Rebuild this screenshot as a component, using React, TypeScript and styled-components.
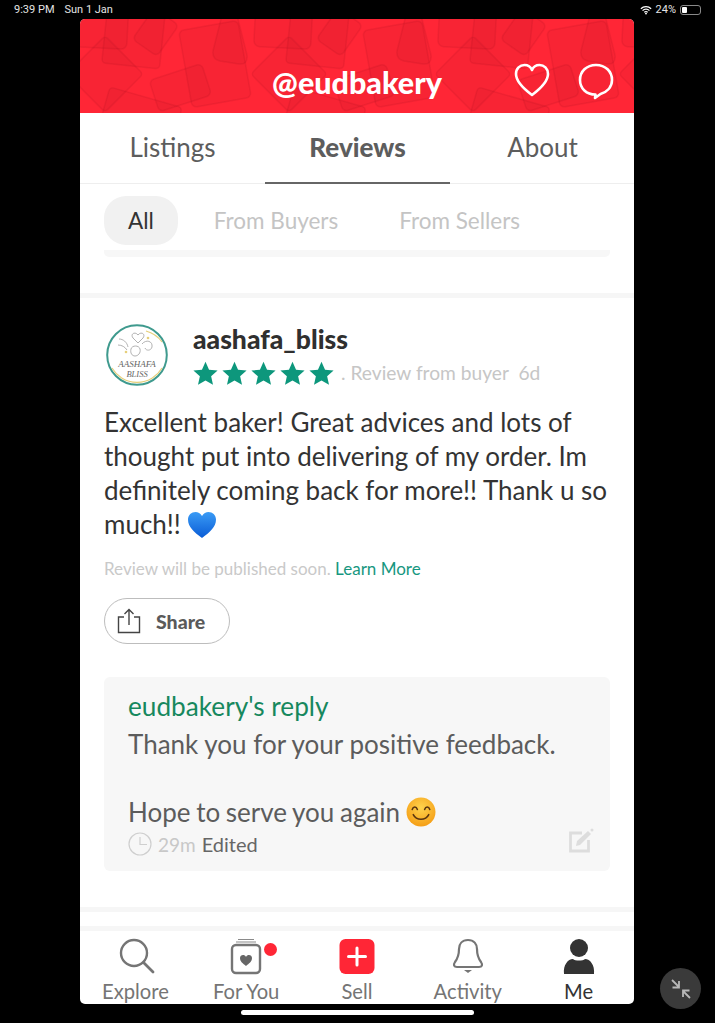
import React from 'react'
import styled, { createGlobalStyle } from 'styled-components'

const GlobalStyle = createGlobalStyle`
  html, body {
    margin: 0;
    padding: 0;
    background: #000;
  }
  body {
    font-family: 'Lato', 'Liberation Sans', sans-serif;
    -webkit-font-smoothing: antialiased;
  }
  * {
    box-sizing: border-box;
  }
`

const Screen = styled.div`
  position: relative;
  width: 715px;
  height: 1023px;
  background: #000;
  overflow: hidden;
`

const StatusBar = styled.div`
  display: flex;
  align-items: center;
  justify-content: space-between;
  height: 19px;
  padding: 0 14px;
  color: #e4e4e4;
  font-family: 'Roboto', sans-serif;
  font-size: 11px;
  span + span {
    margin-left: 10px;
  }
`

const StatusRight = styled.div`
  display: flex;
  align-items: center;
  gap: 4px;
`

const Battery = styled.div`
  width: 21px;
  height: 10px;
  border: 1px solid #8a8a8a;
  border-radius: 3px;
  padding: 1px;
  div {
    width: 5px;
    height: 100%;
    background: #fff;
    border-radius: 1px;
  }
`

const Window = styled.div`
  display: flex;
  flex-direction: column;
  width: 554px;
  height: 985px;
  margin-left: 80px;
  background: #fff;
  border-radius: 5px;
  overflow: hidden;
`

const Header = styled.header`
  position: relative;
  flex: 0 0 94px;
  display: flex;
  align-items: flex-end;
  justify-content: center;
  padding-bottom: 15px;
  background: #ff2636;
  overflow: hidden;
`

const Pattern = styled.svg`
  position: absolute;
  inset: 0;
`

const Handle = styled.h1`
  position: relative;
  margin: 0;
  color: #fff;
  font-size: 30.5px;
  line-height: 32px;
  font-weight: 900;
`

const HeaderActions = styled.div`
  position: absolute;
  right: 20px;
  top: 44px;
  display: flex;
  gap: 28px;
`

const Tabs = styled.nav`
  flex: 0 0 71px;
  display: flex;
  border-bottom: 1px solid #eeeeee;
`

const Tab = styled.div<{ $active?: boolean }>`
  flex: 0 0 185px;
  display: flex;
  align-items: center;
  justify-content: center;
  padding-bottom: 2px;
  margin-bottom: -1px;
  color: #5d5d5d;
  font-size: 26px;
  font-weight: ${p => (p.$active ? 900 : 400)};
  border-bottom: 2px solid ${p => (p.$active ? '#666' : 'transparent')};
`

const Filters = styled.div`
  display: flex;
  align-items: center;
  padding: 12px 24px 0;
`

const Pill = styled.div<{ $active?: boolean }>`
  display: flex;
  align-items: center;
  justify-content: center;
  height: 49px;
  padding: ${p => (p.$active ? '0 24px' : '0 25px 0 36px')};
  border-radius: 22px;
  font-size: 22.5px;
  color: ${p => (p.$active ? '#333' : '#c4c4c4')};
  background: ${p => (p.$active ? '#f1f1f1' : 'transparent')};
`

const FaintBar = styled.div`
  height: 7px;
  margin: 5px 24px 0;
  background: #f7f7f7;
  border-radius: 0 0 5px 5px;
`

const Divider = styled.div<{ $height: number; $top: number; $bleed?: boolean }>`
  flex: 0 0 auto;
  height: ${p => p.$height}px;
  margin: ${p => p.$top}px ${p => (p.$bleed ? '-24px' : '0')} 0;
  background: #f6f6f6;
`

const Review = styled.article`
  flex: 1;
  min-height: 0;
  padding: 26px 24px 0;
`

const Reviewer = styled.div`
  display: flex;
  align-items: flex-start;
  gap: 25px;
  padding-left: 2px;
`

const ReviewerName = styled.div`
  color: #2f2f2f;
  font-size: 26.5px;
  line-height: 30px;
  font-weight: 900;
`

const RatingRow = styled.div`
  display: flex;
  align-items: center;
  gap: 4px;
  margin-top: 6px;
  color: #c6c6c6;
  font-size: 19.2px;
  line-height: 26px;
  span {
    margin-left: 3px;
  }
`

const Body = styled.p`
  margin: 19px 0 0;
  color: #333;
  font-size: 26px;
  line-height: 34px;
`

const Notice = styled.p`
  margin: 17px 0 0;
  color: #c9c9c9;
  font-size: 17px;
  line-height: 22px;
  a {
    color: #17977f;
  }
`

const ShareButton = styled.div`
  display: flex;
  align-items: center;
  gap: 15px;
  width: 126px;
  height: 46px;
  margin-top: 18px;
  padding-left: 12px;
  border: 1px solid #bdbdbd;
  border-radius: 24px;
  color: #5a5a5a;
  font-size: 19.5px;
  font-weight: 900;
`

const ReplyBox = styled.section`
  display: flex;
  flex-direction: column;
  height: 194px;
  margin-top: 33px;
  padding: 13px 24px 0;
  background: #f7f7f7;
  border-radius: 6px;
`

const ReplyTitle = styled.div`
  color: #17885e;
  font-size: 26.2px;
  line-height: 32px;
`

const ReplyText = styled.p`
  margin: 5px 0 0;
  color: #5c5c5c;
  font-size: 26px;
  line-height: 34px;
`

const TightLine = styled.span`
  word-spacing: -1px;
`

const ReplyMeta = styled.div`
  display: flex;
  align-items: center;
  margin-top: 3px;
  font-size: 19px;
  color: #c8c8c8;
  b {
    margin-left: 6px;
    color: #666;
    font-size: 20px;
    font-weight: 400;
  }
`

const TabBar = styled.nav`
  flex: 0 0 73px;
  display: grid;
  grid-template-columns: repeat(5, 1fr);
`

const TabItem = styled.div<{ $active?: boolean }>`
  position: relative;
  display: flex;
  flex-direction: column;
  align-items: center;
  padding-top: 7px;
  color: ${p => (p.$active ? '#333' : '#757575')};
  font-size: 20.2px;
  line-height: 24px;
  svg {
    height: 37px;
    margin-bottom: 4px;
  }
`

const Badge = styled.span`
  position: absolute;
  top: 12px;
  left: 73px;
  width: 13px;
  height: 13px;
  border-radius: 50%;
  background: #ff2636;
`

const HomeBar = styled.div`
  width: 233px;
  height: 5px;
  margin: 6px 0 0 241px;
  background: #fff;
  border-radius: 3px;
`

const FloatingButton = styled.div`
  position: absolute;
  left: 660px;
  top: 968px;
  width: 41px;
  height: 41px;
  display: flex;
  align-items: center;
  justify-content: center;
  border-radius: 50%;
  background: #3a3a3a;
`

// the wallpaper repeats every 184px across the header
const tileOffsets = [-184, 0, 184, 368, 552]

function TileGroup({ x }: { x: number }) {
  return (
    <g transform={`translate(${x} 0)`} fill="#96101e" fillOpacity="0.07" stroke="#96101e" strokeOpacity="0.12" strokeWidth="1.5">
      <rect x="-9" y="-25" width="57" height="54" rx="6" transform="rotate(3 20 2)" />
      <rect x="25" y="-20" width="58" height="67" rx="4" transform="rotate(6 54 14)" />
      <rect x="60" y="-6" width="30" height="38" rx="5" transform="rotate(35 75 14)" />
      <rect x="105" y="6" width="60" height="78" rx="5" transform="rotate(-10 135 45)" />
      <path d="M142-4h15l10 40q1 10-8 9l-19-3q-8-2-7-10z" />
      <rect x="-2" y="28" width="54" height="54" rx="4" transform="rotate(45 25 55)" />
      <rect x="73" y="52" width="55" height="33" rx="5" transform="rotate(-18 101 69)" />
      <rect x="30" y="68" width="75" height="50" rx="4" transform="rotate(16 30 68)" />
    </g>
  )
}

function HeaderPattern() {
  return (
    <Pattern width="554" height="94" viewBox="0 0 554 94">
      {tileOffsets.map(x => <TileGroup key={x} x={x} />)}
    </Pattern>
  )
}

function Star() {
  return (
    <svg width="25" height="25" viewBox="0 0 24 24">
      <path d="M12 .8l3.4 7.6 8.2.8-6.2 5.5 1.8 8.1L12 18.6l-7.2 4.2 1.8-8.1L.4 9.2l8.2-.8z" fill="#0d977c" />
    </svg>
  )
}

function Avatar() {
  return (
    <svg width="62" height="62" viewBox="0 0 62 62" style={{ flex: 'none' }}>
      <circle cx="31" cy="31" r="29.8" fill="#fff" stroke="#3f9a8e" strokeWidth="2" />
      <path d="M6 44a29 29 0 0 0 50 0M56 18a29 29 0 0 0-16-11" fill="none" stroke="#e6cf7a" strokeWidth="1.200" />
      <path d="M32 11c-3-4-8-1-5 3l5 5 5-5c3-4-2-7-5-3zM13 15c4 0 8 3 9 8M12 21c4 0 7 2 9 5M36 20c4-5 11-3 10 3-1 4-6 4-7 1M25 25c1-4 8-4 9 0s-2 7-5 7-5-3-4-7z" fill="none" stroke="#a9a9a9" strokeWidth="0.9" />
      <circle cx="42" cy="14" r="1.300" fill="#e6cf7a" />
      <circle cx="20" cy="28" r="1.300" fill="#e6cf7a" />
      <text x="31" y="43" fontSize="9" fill="#666" textAnchor="middle" fontFamily="Liberation Serif, serif" fontStyle="italic">AASHAFA</text>
      <text x="31" y="53" fontSize="8.500" fill="#666" textAnchor="middle" fontFamily="Liberation Serif, serif" fontStyle="italic">BLISS</text>
    </svg>
  )
}

export default function App() {
  return (
    <Screen>
      <GlobalStyle />
      <StatusBar>
        <div>
          <span>9:39 PM</span>
          <span>Sun 1 Jan</span>
        </div>
        <StatusRight>
          <svg width="12" height="10" viewBox="0 0 14 11">
            <path d="M1 4a8.500 8.500 0 0 1 12 0M3 6.200a5.500 5.500 0 0 1 8 0M5 8.200a2.600 2.600 0 0 1 4 0" fill="none" stroke="#fff" strokeWidth="1.400" />
            <circle cx="7" cy="9.600" r="1.100" fill="#fff" />
          </svg>
          <span>24%</span>
          <Battery><div /></Battery>
        </StatusRight>
      </StatusBar>

      <Window>
        <Header>
          <HeaderPattern />
          <Handle>@eudbakery</Handle>
          <HeaderActions>
            <svg width="36" height="34" viewBox="0 0 36 34">
              <path d="M18 32C10 26 2 19 2 11 2 5.500 6 2 10.500 2 13.500 2 16.500 3.500 18 7c1.500-3.500 4.500-5 7.500-5C30 2 34 5.500 34 11c0 8-8 15-16 21z" fill="none" stroke="#fff" strokeWidth="2.600" strokeLinejoin="round" />
            </svg>
            <svg width="36" height="37" viewBox="0 0 36 37">
              <path d="M17.500 31.500C8.500 31.500 2 25.500 2 17S8.500 2 18 2s16 6.500 16 15c0 7-5 12-11.500 14L17 35z" fill="none" stroke="#fff" strokeWidth="2.600" strokeLinejoin="round" />
            </svg>
          </HeaderActions>
        </Header>

        <Tabs>
          <Tab>Listings</Tab>
          <Tab $active>Reviews</Tab>
          <Tab>About</Tab>
        </Tabs>

        <Filters>
          <Pill $active>All</Pill>
          <Pill>From Buyers</Pill>
          <Pill>From Sellers</Pill>
        </Filters>
        <FaintBar />
        <Divider $height={5} $top={36} />

        <Review>
          <Reviewer>
            <Avatar />
            <div>
              <ReviewerName>aashafa_bliss</ReviewerName>
              <RatingRow>
                <Star /><Star /><Star /><Star /><Star />
                <span>. Review from buyer&nbsp; 6d</span>
              </RatingRow>
            </div>
          </Reviewer>
          <Body>
            Excellent baker! Great advices and lots of thought put into delivering of my order. Im definitely coming back for more!! Thank u so much!!{' '}
            <svg width="30" height="28" viewBox="0 0 30 28" style={{ verticalAlign: -5 }}>
              <defs>
                <linearGradient id="blueHeart" x1="0" y1="0" x2="0" y2="1">
                  <stop offset="0" stopColor="#3a9bf5" />
                  <stop offset="1" stopColor="#0a5cd6" />
                </linearGradient>
              </defs>
              <path d="M15 27C7 21 1 16 1 8.500 1 4 4.500 1 8.500 1 11 1 13.500 2.300 15 5c1.500-2.700 4-4 6.500-4C25.500 1 29 4 29 8.500 29 16 23 21 15 27z" fill="url(#blueHeart)" />
            </svg>
          </Body>
          <Notice>
            Review will be published soon. <a>Learn More</a>
          </Notice>
          <ShareButton>
            <svg width="24" height="26" viewBox="0 0 24 26">
              <path d="M7 9H1.500v15.500h21V9H17M12 17V1.500M7.500 6L12 1.500 16.500 6" fill="none" stroke="#444" strokeWidth="1.400" />
            </svg>
            Share
          </ShareButton>
          <ReplyBox>
            <ReplyTitle>eudbakery's reply</ReplyTitle>
            <ReplyText>
              Thank you for your positive feedback.
              <br />
              <br />
              <TightLine>Hope to serve you again </TightLine>
              <svg width="30" height="30" viewBox="0 0 29 29" style={{ verticalAlign: -5 }}>
                <defs>
                  <radialGradient id="smile" cx="0.5" cy="0.35" r="0.7">
                    <stop offset="0" stopColor="#ffd34d" />
                    <stop offset="1" stopColor="#f49a12" />
                  </radialGradient>
                </defs>
                <circle cx="14.500" cy="14.500" r="14" fill="url(#smile)" />
                <path d="M6 12c1-3 4-3 5 0M18 12c1-3 4-3 5 0M7 17c3 6 12 6 15 0" fill="none" stroke="#5a3510" strokeWidth="1.500" strokeLinecap="round" />
              </svg>
            </ReplyText>
            <ReplyMeta>
              <svg width="24" height="24" viewBox="0 0 24 24" style={{ marginRight: 6 }}>
                <circle cx="12" cy="12" r="11" fill="none" stroke="#cfcfcf" strokeWidth="1.200" />
                <path d="M12 5v7.500h7" fill="none" stroke="#cfcfcf" strokeWidth="1.200" />
              </svg>
              29m
              <b>Edited</b>
              <svg width="26" height="25" viewBox="0 0 26 25" style={{ marginLeft: 'auto', marginRight: -8, marginTop: -8 }}>
                <path d="M14 5H2.500v18h18V12" fill="none" stroke="#dddddd" strokeWidth="2.800" />
                <path d="M9 13L20 3l3 3-11 11-4 1z" fill="#dddddd" />
                <circle cx="24" cy="2" r="1.500" fill="#dddddd" />
              </svg>
            </ReplyMeta>
          </ReplyBox>
          <Divider $height={5} $top={36} $bleed />
        </Review>

        <Divider $height={5} $top={0} />
        <TabBar>
          <TabItem>
            <svg width="36" height="37" viewBox="0 0 36 37" style={{ marginLeft: 3 }}>
              <circle cx="15" cy="15" r="13" fill="none" stroke="#757575" strokeWidth="2.400" />
              <path d="M24.500 24.500L34 34" stroke="#757575" strokeWidth="2.800" strokeLinecap="round" />
            </svg>
            Explore
          </TabItem>
          <TabItem>
            <svg width="32" height="37" viewBox="0 0 32 37">
              <path d="M8 1.500h16M6 4h20" stroke="#8a8a8a" strokeWidth="1.200" />
              <rect x="2" y="7" width="28" height="28" rx="4" fill="none" stroke="#757575" strokeWidth="2.400" />
              <path d="M16 28c-3-2.500-6-4.500-6-8 0-2 1.500-3 3-3 1.200 0 2.400.6 3 2 .6-1.400 1.800-2 3-2 1.500 0 3 1 3 3 0 3.500-3 5.500-6 8z" fill="#666" />
            </svg>
            <Badge />
            For You
          </TabItem>
          <TabItem>
            <svg width="36" height="37" viewBox="0 0 36 37">
              <rect x="0.500" y="1" width="35" height="35" rx="6" fill="#ff2636" />
              <path d="M18 10v17M9.500 18.500h17" stroke="#fff" strokeWidth="3" strokeLinecap="round" />
            </svg>
            Sell
          </TabItem>
          <TabItem>
            <svg width="34" height="37" viewBox="0 0 34 37">
              <path d="M17 2c-6 0-9 4-9 9 0 6-1 9-4 13-2 3-1 5 2 5h22c3 0 4-2 2-5-3-4-4-7-4-13 0-5-3-9-9-9z" fill="none" stroke="#757575" strokeWidth="2.200" />
              <path d="M13 32h8l-4 3z" fill="#757575" />
            </svg>
            Activity
          </TabItem>
          <TabItem $active>
            <svg width="32" height="37" viewBox="0 0 32 37">
              <circle cx="16" cy="10" r="9" fill="#333" />
              <path d="M1 36c-1-9 4-15 9-15 2 2 10 2 12 0 5 0 10 6 9 15z" fill="#333" />
            </svg>
            Me
          </TabItem>
        </TabBar>
      </Window>

      <HomeBar />
      <FloatingButton>
        <svg width="22" height="22" viewBox="0 0 22 22">
          <path d="M2 2l7 7M9 3v6.500H2.500M20 20l-7-7M13 19v-6.500h6.500" fill="none" stroke="#b8b8b8" strokeWidth="1.800" />
        </svg>
      </FloatingButton>
    </Screen>
  )
}
